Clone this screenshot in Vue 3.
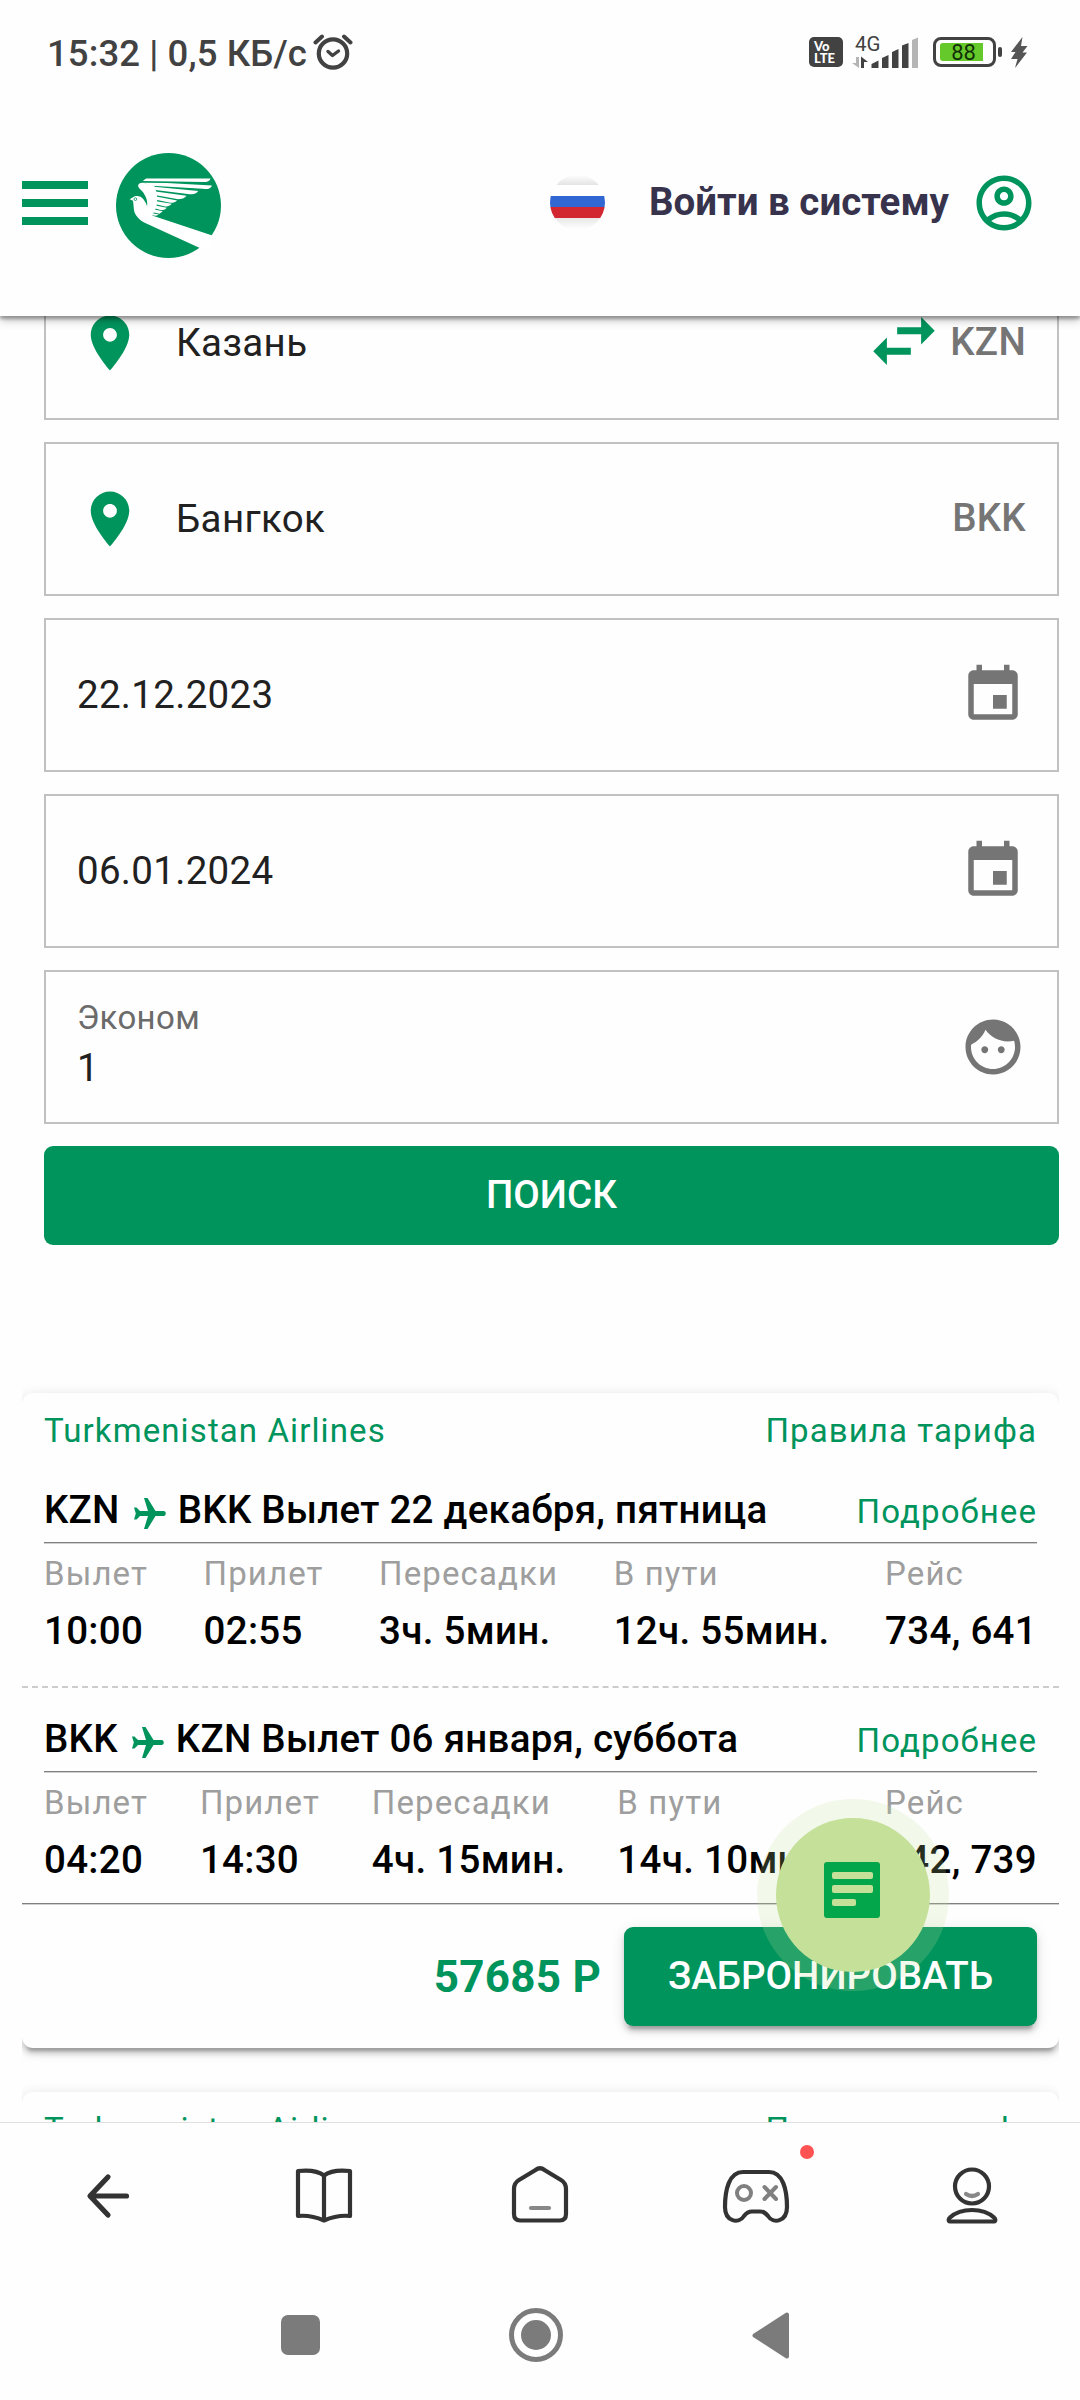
<script setup>
    import {ref} from 'vue'

    const cities = ref([
        {name: 'Казань', code: 'KZN', swap: true},
        {name: 'Бангкок', code: 'BKK', swap: false}
    ])

    const dates = ref(['22.12.2023', '06.01.2024'])

    const passengers = ref({
        cabin: 'Эконом',
        count: 1
    })

    const flights = ref([
        {
            airline: 'Turkmenistan Airlines',
            price: '57685 Р',
            legs: [
                {
                    from: 'KZN',
                    to: 'BKK',
                    date: 'Вылет 22 декабря, пятница',
                    info: [
                        {label: 'Вылет', value: '10:00'},
                        {label: 'Прилет', value: '02:55'},
                        {label: 'Пересадки', value: '3ч. 5мин.'},
                        {label: 'В пути', value: '12ч. 55мин.'},
                        {label: 'Рейс', value: '734, 641'}
                    ]
                },
                {
                    from: 'BKK',
                    to: 'KZN',
                    date: 'Вылет 06 января, суббота',
                    info: [
                        {label: 'Вылет', value: '04:20'},
                        {label: 'Прилет', value: '14:30'},
                        {label: 'Пересадки', value: '4ч. 15мин.'},
                        {label: 'В пути', value: '14ч. 10мин.'},
                        {label: 'Рейс', value: '742, 739'}
                    ]
                }
            ]
        },
        {
            airline: 'Turkmenistan Airlines',
            price: '',
            legs: []
        }
    ])

    const swapCities = () => {
        const [a, b] = cities.value
        const tmp = {name: a.name, code: a.code}
        a.name = b.name
        a.code = b.code
        b.name = tmp.name
        b.code = tmp.code
    }
</script>
<template>
    <div class="screen">
        <header class="top">
            <div class="status-bar">
                <span class="clock">15:32 | 0,5 КБ/с</span>
                <svg class="alarm" width="40" height="38" viewBox="0 0 40 38" fill="none" stroke="#424242" stroke-linecap="round">
                    <circle cx="20" cy="20.5" r="14.2" stroke-width="4.2" />
                    <path d="M2.5 9.5 L9 3.5 M37.5 9.5 L31 3.5" stroke-width="4" />
                    <path d="M15 18.5 L19.5 22.5 L25.5 18" stroke-width="3.4" stroke-linejoin="round" />
                </svg>
                <div class="volte"><span>Vo</span><span>LTE</span></div>
                <div class="signal">
                    <span class="net">4G</span>
                    <svg width="68" height="32" viewBox="0 0 68 32" fill="#424242">
                        <path d="M4 21 h3 v11 L0 27 h4z" fill="#b5b5b5" />
                        <path d="M9 32 V20.5 L16 26 H12 V32z" />
                        <path d="M19.5 32 V28 L26.5 24.5 V32z" />
                        <path d="M30 32 V22 L36.5 19 V32z" />
                        <path d="M40 32 V16 L46.5 13 V32z" />
                        <path d="M50 32 V9.5 L56.5 7 V32z" />
                        <path d="M60 32 V4 L66 1.5 V32z" fill="#b5b5b5" />
                    </svg>
                </div>
                <div class="battery">
                    <div class="battery-level"></div>
                    <span>88</span>
                </div>
                <div class="battery-nub"></div>
                <svg class="bolt" width="18" height="31" viewBox="0 0 18 31" fill="#555">
                    <path d="M12.5 0 L1 15 H5.5 L1 22 H7.5 L5 31 L17 15.5 H12.5 L17.5 9 H11z" />
                </svg>
            </div>
            <div class="app-bar">
                <div class="burger"><i></i><i></i><i></i></div>
                <svg class="logo" width="105" height="105" viewBox="348 459 314 314">
                    <circle cx="505" cy="616" r="157" fill="#00945d" />
                    <g fill="#fff">
                        <path d="M389 597 L399 591 C408 584 424 588 430 597 C437 606 440 613 441 618 C444 603 436 584 425 572 C420 567 414 562 414 557 C415 550 421 547 430 548 L462 557 C470 572 475 600 468 622 C464 633 458 640 456 646 L636 706 L650 718 L620 752 L597 742 L437 669 C412 657 401 640 401 622 L399 602z" />
                        <path d="M428 543 L438 535 H631 C628 543 621 546 610 546z" />
                        <path d="M430 548 L500 549 L635 556 C631 566 622 568 608 566 L455 557z" />
                        <path d="M462 560 L594 573 C588 581 580 583 568 582 L466 570z" />
                        <path d="M466 574 L559 587 C551 596 544 597 534 597 L468 585z" />
                        <path d="M468 589 L531 601 C524 607 518 608 510 608 L468 599z" />
                        <path d="M468 603 L515 611 C508 619 502 619 495 619 L467 612z" />
                        <path d="M466 616 L500 623 C494 629 490 630 484 630 L463 624z" />
                        <path d="M462 628 L488 633 L478 641 L458 636z" />
                        <path d="M457 639 L476 643 L468 647 L455 645z" />
                    </g>
                    <circle cx="406" cy="597" r="4" fill="none" stroke="#00945d" stroke-width="2.5" />
                </svg>
                <div class="flag"></div>
                <span class="login">Войти в систему</span>
                <svg class="account" width="66" height="66" viewBox="0 0 24 24" fill="#00945d">
                    <path d="M12 2C6.48 2 2 6.48 2 12s4.48 10 10 10 10-4.48 10-10S17.52 2 12 2zM7.35 18.5C8.66 17.56 10.26 17 12 17s3.34.56 4.65 1.5C15.34 19.44 13.74 20 12 20s-3.34-.56-4.65-1.5zm10.79-1.38C16.45 15.8 14.32 15 12 15s-4.45.8-6.14 2.12C4.7 15.73 4 13.95 4 12c0-4.42 3.58-8 8-8s8 3.58 8 8c0 1.95-.7 3.73-1.86 5.12zM12 6c-1.93 0-3.5 1.57-3.5 3.5S10.07 13 12 13s3.5-1.57 3.5-3.5S13.93 6 12 6zm0 5c-.83 0-1.5-.67-1.5-1.5S11.17 8 12 8s1.5.67 1.5 1.5S12.83 11 12 11z" />
                </svg>
            </div>
        </header>

        <main class="content">
            <form class="search" @submit.prevent>
                <div v-for="city in cities" :key="city.code" class="field">
                    <svg width="66" height="66" viewBox="0 0 24 24" fill="#00945d">
                        <path d="M12 2C8.13 2 5 5.13 5 9c0 5.25 7 13 7 13s7-7.75 7-13c0-3.87-3.13-7-7-7zm0 9.5c-1.38 0-2.5-1.12-2.5-2.5s1.12-2.5 2.5-2.5 2.5 1.12 2.5 2.5-1.12 2.5-2.5 2.5z" />
                    </svg>
                    <span class="city">{{ city.name }}</span>
                    <svg v-if="city.swap" class="swap" @click="swapCities" width="82" height="82" viewBox="0 0 24 24" fill="#00945d">
                        <path d="M6.99 11L3 15l3.99 4v-3H14v-2H6.99v-3zM21 9l-3.99-4v3H10v2h7.01v3L21 9z" />
                    </svg>
                    <span class="code">{{ city.code }}</span>
                </div>
                <div v-for="date in dates" :key="date" class="field">
                    <span class="value">{{ date }}</span>
                    <svg width="66" height="66" viewBox="0 0 24 24" fill="#757575">
                        <path d="M17 12h-5v5h5v-5zM16 1v2H8V1H6v2H5c-1.11 0-1.99.9-1.99 2L3 19c0 1.1.89 2 2 2h14c1.1 0 2-.9 2-2V5c0-1.1-.9-2-2-2h-1V1h-2zm3 18H5V8h14v11z" />
                    </svg>
                </div>
                <div class="field">
                    <div class="passengers">
                        <span class="cabin">{{ passengers.cabin }}</span>
                        <span class="count">{{ passengers.count }}</span>
                    </div>
                    <svg width="66" height="66" viewBox="0 0 24 24" fill="#757575">
                        <path d="M9 11.75c-.69 0-1.25.56-1.25 1.25s.56 1.25 1.25 1.25 1.25-.56 1.25-1.25-.56-1.25-1.25-1.25zm6 0c-.69 0-1.25.56-1.25 1.25s.56 1.25 1.25 1.25 1.25-.56 1.25-1.25-.56-1.25-1.25-1.25zM12 2C6.48 2 2 6.48 2 12s4.48 10 10 10 10-4.48 10-10S17.52 2 12 2zm0 18c-4.41 0-8-3.59-8-8 0-.29.02-.58.05-.86 2.36-1.05 4.23-2.98 5.21-5.37C11.07 8.33 14.05 10 17.42 10c.78 0 1.53-.09 2.25-.26.21.71.33 1.47.33 2.26 0 4.41-3.59 8-8 8z" />
                    </svg>
                </div>
                <button class="search-button">ПОИСК</button>
            </form>

            <section class="results">
                <article v-for="(flight, i) in flights" :key="i" class="card">
                    <div class="card-head">
                        <span>{{ flight.airline }}</span>
                        <span>Правила тарифа</span>
                    </div>
                    <div v-for="leg in flight.legs" :key="leg.from" class="leg">
                        <div class="leg-title">
                            <span class="route">{{ leg.from }}</span>
                            <svg class="plane" width="32" height="31" viewBox="0 0 32 31" fill="#00945d">
                                <path d="M10 0 H13.5 L21.5 13 H29.5 C32.5 13 32.5 18 29.5 18 H21.5 L13.5 31 H10 L14 18 H6 L2.5 21.5 H0 L1.8 15.5 L0 9.5 H2.5 L6 13 H14z" />
                            </svg>
                            <span class="route">{{ leg.to }} {{ leg.date }}</span>
                            <a class="more">Подробнее</a>
                        </div>
                        <div class="leg-info">
                            <div v-for="item in leg.info" :key="item.label" class="info">
                                <span class="info-label">{{ item.label }}</span>
                                <span class="info-value">{{ item.value }}</span>
                            </div>
                        </div>
                    </div>
                    <div v-if="flight.price" class="card-foot">
                        <span class="price">{{ flight.price }}</span>
                        <button class="book">ЗАБРОНИРОВАТЬ</button>
                    </div>
                </article>
            </section>
        </main>

        <nav class="browser-bar">
            <div class="tab">
                <svg width="66" height="66" viewBox="0 0 66 66" fill="none" stroke="#333" stroke-width="5.2" stroke-linecap="round" stroke-linejoin="round">
                    <path d="M33 14 L15 33 L33 52 M16 33 H51.5" />
                </svg>
            </div>
            <div class="tab">
                <svg width="66" height="66" viewBox="0 0 66 66" fill="none" stroke="#333" stroke-width="4.2" stroke-linejoin="round">
                    <path d="M33 12.5 C26 7 16 7 7 8 V53 C17 52 25 54 33 57.5 C41 54 49 52 59 53 V8 C50 7 40 7 33 12.5z M33 12.5 V57.5" />
                </svg>
            </div>
            <div class="tab">
                <svg width="66" height="66" viewBox="0 0 66 66" fill="none" stroke="#333" stroke-width="4.2" stroke-linecap="round">
                    <path d="M28.5 7 Q33 3.5 37.5 7 L54 17 Q59 20 59 26 V51 Q59 57.5 53 57.5 H13 Q7 57.5 7 51 V26 Q7 20 12 17z" />
                    <path d="M24 45 H42" stroke="#888" />
                </svg>
            </div>
            <div class="tab">
                <svg width="74" height="66" viewBox="0 0 74 66" fill="none" stroke="#333" stroke-width="4.2" stroke-linecap="round">
                    <path d="M24 9 H50 C64 9 68 27 68 44 C68 59 54 61 49 53 C46 49 44 48.5 41 48.5 H33 C30 48.5 28 49 25 53 C20 61 6 59 6 44 C6 27 10 9 24 9z" />
                    <circle cx="25" cy="30" r="7" stroke="#808080" stroke-width="4" />
                    <path d="M48.5 24 L60 36 M60 24 L48.5 36" stroke="#808080" stroke-width="4" transform="translate(-3 0)" />
                </svg>
                <i class="dot"></i>
            </div>
            <div class="tab">
                <svg width="66" height="66" viewBox="0 0 66 66" fill="none" stroke="#333" stroke-width="4.2" stroke-linecap="round" stroke-linejoin="round">
                    <circle cx="33" cy="23.5" r="17" />
                    <path d="M27 31 Q33 35 39 31" stroke="#888" />
                    <path d="M11 58.5 C9 58.5 9.5 55.5 11 54.5 C17 49 24 47 33 47 C42 47 49 49 55 54.5 C56.5 55.5 57 58.5 55 58.5z" />
                </svg>
            </div>
        </nav>
        <div class="system-bar">
            <div class="recents"></div>
            <div class="home"><i></i></div>
            <svg class="back" width="37" height="47" viewBox="0 0 37 47" fill="#7b7b7b" stroke="#7b7b7b" stroke-width="4" stroke-linejoin="round">
                <path d="M35 2.5 V44.5 L2.5 23.5z" />
            </svg>
        </div>

        <div class="chat">
            <div class="chat-inner">
                <div class="chat-note"><i></i><i></i><i class="short"></i></div>
            </div>
        </div>
    </div>
</template>
<style>
body{
    margin: 0;
    background: #fefefe;
}
</style>
<style scoped>
.screen{
    position: relative;
    display: flex;
    flex-direction: column;
    width: 1080px;
    height: 2400px;
    overflow: hidden;
    background: #fefefe;
    font-family: Roboto, "Noto Sans", sans-serif;
    font-size: 38.5px;
    color: #212121;
}
svg{
    display: block;
    flex: none;
}
button{
    border: 0;
    padding: 0 0 2px;
    font-family: inherit;
    font-size: 38.5px;
    font-weight: 500;
    line-height: 97px;
    color: #fff;
    background: #00945d;
    border-radius: 9px;
}
.top{
    z-index: 2;
    flex: none;
    height: 316px;
    box-sizing: border-box;
    background: #fefefe;
    box-shadow: 0 3px 3px rgba(0, 0, 0, .28), 0 4px 9px rgba(0, 0, 0, .26);
}
.status-bar{
    display: flex;
    align-items: center;
    height: 104px;
    padding: 0 52px 0 47px;
}
.clock{
    font-size: 36.5px;
    font-weight: 500;
    line-height: 44px;
    letter-spacing: .1px;
    padding-top: 4px;
    color: #424242;
}
.alarm{
    margin: 0 auto 0 6px;
}
.volte{
    display: flex;
    flex-direction: column;
    align-items: flex-start;
    justify-content: center;
    box-sizing: border-box;
    width: 34px;
    height: 30px;
    padding-left: 5px;
    border-radius: 5px;
    background: #424242;
    color: #fff;
    font-family: Lato, sans-serif;
    font-size: 13px;
    font-weight: 900;
    line-height: 12px;
}
.signal{
    position: relative;
    margin-left: 9px;
}
.net{
    position: absolute;
    left: 3px;
    top: -3px;
    font-size: 20.5px;
    line-height: 22px;
    color: #424242;
}
.battery{
    position: relative;
    box-sizing: border-box;
    width: 63px;
    height: 30px;
    margin-left: 13px;
    padding: 3px 4px;
    border: 3px solid #424242;
    border-radius: 8px;
}
.battery-level{
    width: 43px;
    height: 18px;
    border-radius: 3px 0 0 3px;
    background: #66c92b;
}
.battery span{
    position: absolute;
    left: 0;
    right: 0;
    top: 0;
    padding-right: 2px;
    font-size: 22px;
    line-height: 25px;
    text-align: center;
    color: #123008;
}
.battery-nub{
    width: 4px;
    height: 10px;
    margin: 0 8px 0 2px;
    border-radius: 2px;
    background: #424242;
}
.app-bar{
    display: flex;
    align-items: center;
    height: 197px;
    padding: 0 43px 0 22px;
}
.burger{
    display: flex;
    flex-direction: column;
    gap: 10.5px;
    width: 66px;
    padding-top: 1px;
}
.burger i{
    height: 7.7px;
    background: #00945d;
}
.logo{
    margin: 6px auto 0 28px;
}
.flag{
    width: 55px;
    height: 55px;
    border-radius: 50%;
    background: linear-gradient(#fefefe 0, #e4e4e4 10px, #fff 10px, #fff 21px, #3067d3 21px, #3067d3 32px, #d22630 32px, #d22630 43px, #e8e8e8 43px, #fefefe 54px);
}
.login{
    margin: 0 22px 1px 44px;
    font-weight: 700;
    line-height: 44px;
    color: #38334d;
}
.content{
    flex: none;
    height: 1806px;
    overflow: hidden;
}
.search{
    display: flex;
    flex-direction: column;
    gap: 22px;
    margin: -50px 21px 0 44px;
}
.field{
    display: flex;
    align-items: center;
    box-sizing: border-box;
    height: 154px;
    padding: 0 31px;
    border: 2px solid #c1c1c1;
}
.city{
    flex: 1;
    margin-left: 33px;
    padding-bottom: 2px;
    letter-spacing: .35px;
}
.swap{
    margin: 0 5px 5px 0;
}
.code{
    padding-bottom: 4px;
    font-weight: 500;
    letter-spacing: .3px;
    color: #757575;
}
.value{
    flex: 1;
    padding-bottom: 1px;
    letter-spacing: .3px;
}
.passengers{
    flex: 1;
    display: flex;
    flex-direction: column;
}
.cabin{
    font-size: 33px;
    line-height: 42px;
    letter-spacing: .35px;
    color: #6b6b6b;
}
.count{
    line-height: 58px;
}
.results{
    margin: 123px 21px 0 22px;
    padding-top: 25px;
    overflow: hidden;
}
.card{
    display: flex;
    flex-direction: column;
    box-sizing: border-box;
    min-height: 200px;
    margin-bottom: 44px;
    border-radius: 11px;
    background: #fefefe;
    box-shadow: 0 8px 3px -5.5px rgba(0, 0, 0, .2), 0 5.5px 5.5px rgba(0, 0, 0, .14), 0 3px 14px rgba(0, 0, 0, .14);
}
.card-head{
    display: flex;
    justify-content: space-between;
    padding: 16px 22px 7px;
    font-size: 33px;
    line-height: 43px;
    letter-spacing: 1.1px;
    color: #00945d;
}
.leg{
    padding: 22px 22px 26px;
}
.leg + .leg{
    border-top: 2px dashed #ccc;
    padding-bottom: 14px;
}
.leg-title{
    display: flex;
    align-items: baseline;
    height: 61px;
    margin-bottom: 1px;
    border-bottom: 1px solid #808080;
    box-shadow: 0 1px #cfcfcf;
    line-height: 58px;
}
.route{
    font-weight: 500;
    letter-spacing: .28px;
    color: #000;
}
.plane{
    align-self: center;
    margin: 4px 12px 0 14px;
}
.more{
    margin-left: auto;
    font-size: 33px;
    letter-spacing: 1.1px;
    color: #00945d;
}
.leg-info{
    display: flex;
    justify-content: space-between;
    padding-top: 5px;
}
.info{
    display: flex;
    flex-direction: column;
}
.info-label{
    font-size: 33px;
    line-height: 50px;
    letter-spacing: 1.1px;
    color: #9e9e9e;
}
.info-value{
    padding-top: 3px;
    font-weight: 500;
    line-height: 58px;
    letter-spacing: .3px;
    color: #000;
}
.card-foot{
    display: flex;
    justify-content: flex-end;
    align-items: center;
    padding: 23px 22px 22px;
    border-top: 1px solid #808080;
    box-shadow: inset 0 1px #cfcfcf;
}
.price{
    margin-right: 23px;
    font-size: 44px;
    font-weight: 700;
    letter-spacing: .25px;
    color: #00945d;
}
.book{
    width: 413px;
    box-shadow: 0 8px 3px -5.5px rgba(0, 0, 0, .2), 0 5.5px 5.5px rgba(0, 0, 0, .14), 0 3px 14px rgba(0, 0, 0, .12);
}
.browser-bar{
    display: flex;
    flex: none;
    box-sizing: border-box;
    height: 146px;
    border-top: 1px solid #e0e0e0;
    background: #fefefe;
}
.tab{
    position: relative;
    flex: 1;
    display: flex;
    align-items: center;
    justify-content: center;
}
.dot{
    position: absolute;
    right: 50px;
    top: 22px;
    width: 14px;
    height: 14px;
    border-radius: 50%;
    background: #ff5252;
}
.system-bar{
    display: flex;
    align-items: center;
    box-sizing: border-box;
    height: 132px;
    padding: 2px 291px 0 281px;
    justify-content: space-between;
}
.recents{
    width: 39px;
    height: 40px;
    border-radius: 7px;
    background: #7b7b7b;
}
.home{
    display: flex;
    align-items: center;
    justify-content: center;
    box-sizing: border-box;
    width: 54px;
    height: 54px;
    border: 5px solid #7b7b7b;
    border-radius: 50%;
}
.home i{
    width: 30px;
    height: 30px;
    border-radius: 50%;
    background: #7b7b7b;
}
/* floating chat button with its halo */
.chat{
    position: absolute;
    left: 757px;
    top: 1799px;
    z-index: 3;
    display: flex;
    align-items: center;
    justify-content: center;
    width: 192px;
    height: 192px;
    border-radius: 50%;
    background: rgba(197, 225, 153, .2);
}
.chat-inner{
    display: flex;
    align-items: center;
    justify-content: center;
    box-sizing: border-box;
    width: 154px;
    height: 154px;
    padding: 0 2px 10px 0;
    border-radius: 50%;
    background: #c5e099;
}
.chat-note{
    display: flex;
    flex-direction: column;
    gap: 6px;
    box-sizing: border-box;
    width: 56px;
    height: 56px;
    padding: 9.5px 7.5px;
    border-radius: 3px;
    background: #04a64b;
}
.chat-note i{
    height: 7.5px;
    border-radius: 2px;
    background: #c5e099;
}
.chat-note .short{
    width: 24px;
}
</style>
